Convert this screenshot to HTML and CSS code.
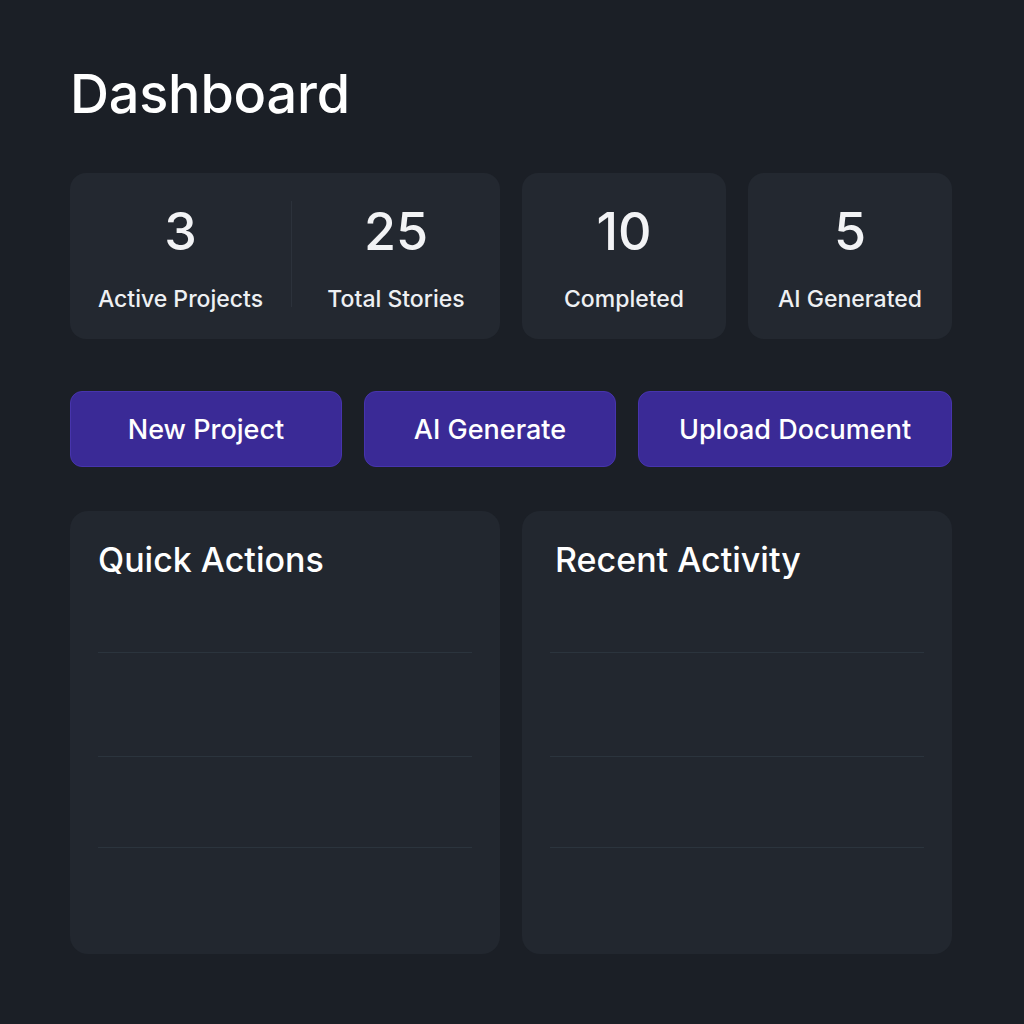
FILE: index.html
```html
<!DOCTYPE html>
<html lang="en">
<head>
<meta charset="utf-8">
<title>Dashboard</title>
<link rel="stylesheet" href="styles.css">
</head>
<body>
<main class="page">
  <h1 class="title">Dashboard</h1>

  <section class="stats">
    <div class="card card-split">
      <div class="stat">
        <div class="stat-value">3</div>
        <div class="stat-label">Active Projects</div>
      </div>
      <div class="split-divider"></div>
      <div class="stat">
        <div class="stat-value">25</div>
        <div class="stat-label">Total Stories</div>
      </div>
    </div>
    <div class="card">
      <div class="stat">
        <div class="stat-value">10</div>
        <div class="stat-label">Completed</div>
      </div>
    </div>
    <div class="card">
      <div class="stat">
        <div class="stat-value">5</div>
        <div class="stat-label">AI Generated</div>
      </div>
    </div>
  </section>

  <section class="actions">
    <button class="btn btn-new">New Project</button>
    <button class="btn btn-ai">AI Generate</button>
    <button class="btn btn-upload">Upload Document</button>
  </section>

  <section class="panels">
    <div class="panel">
      <h2 class="panel-title">Quick Actions</h2>
      <div class="rows">
        <div class="row r1"></div>
        <div class="row r2"></div>
        <div class="row r3"></div>
      </div>
    </div>
    <div class="panel">
      <h2 class="panel-title panel-title-right">Recent Activity</h2>
      <div class="rows">
        <div class="row r1"></div>
        <div class="row r2"></div>
        <div class="row r3"></div>
      </div>
    </div>
  </section>
</main>
</body>
</html>
```

FILE: styles.css
```css
* { box-sizing: border-box; }

html, body {
  margin: 0;
  padding: 0;
  background: #1b1f26;
  color: #f4f5f7;
  font-family: Inter, "Noto Sans", "Liberation Sans", sans-serif;
}

.page {
  width: 1024px;
  height: 1024px;
  padding: 62px 72px 0 70px;
}

.title {
  margin: 0;
  font-size: 54px;
  font-weight: 500;
  letter-spacing: -0.2px;
  line-height: 64px;
  color: #ffffff;
}

.stats {
  margin-top: 47px;
  display: grid;
  grid-template-columns: 430px 1fr 1fr;
  gap: 22px;
}

.card {
  background: #232830;
  border-radius: 16px;
  height: 166px;
  display: flex;
  align-items: stretch;
}

.card-split .stat { flex: 1; }
.card-split .stat:first-child { flex: 0 0 221px; }

.split-divider {
  width: 1px;
  background: #2c323b;
  margin: 28px 0 32px;
}

.stat {
  flex: 1;
  display: flex;
  flex-direction: column;
  align-items: center;
  padding-top: 29px;
}

.stat-value {
  font-size: 52px;
  line-height: 60px;
  font-weight: 500;
  color: #f2f3f5;
}

.stat-label {
  margin-top: 23px;
  font-size: 23px;
  line-height: 28px;
  font-weight: 500;
  color: #eef0f3;
}

.actions {
  margin-top: 52px;
  display: grid;
  grid-template-columns: 272px 252px 1fr;
  gap: 22px;
}

.btn {
  height: 76px;
  border-radius: 12px;
  background: #3a2a96;
  border: 1px solid #4734ad;
  color: #ffffff;
  font-family: inherit;
  font-size: 27px;
  font-weight: 500;
  padding: 0;
}

.panels {
  margin-top: 44px;
  display: grid;
  grid-template-columns: 1fr 1fr;
  gap: 22px;
}

.panel {
  background: #22272f;
  border-radius: 18px;
  height: 443px;
  padding: 27px 28px 0 28px;
}

.panel-title {
  margin: 0;
  font-size: 34px;
  line-height: 44px;
  font-weight: 500;
  color: #ffffff;
}

.panel-title-right { padding-left: 5px; }

.rows {
  display: flex;
  flex-direction: column;
}

.row { border-bottom: 1px solid #2b343d; }
.r1 { height: 71px; }
.r2 { height: 104px; }
.r3 { height: 91px; }
```
